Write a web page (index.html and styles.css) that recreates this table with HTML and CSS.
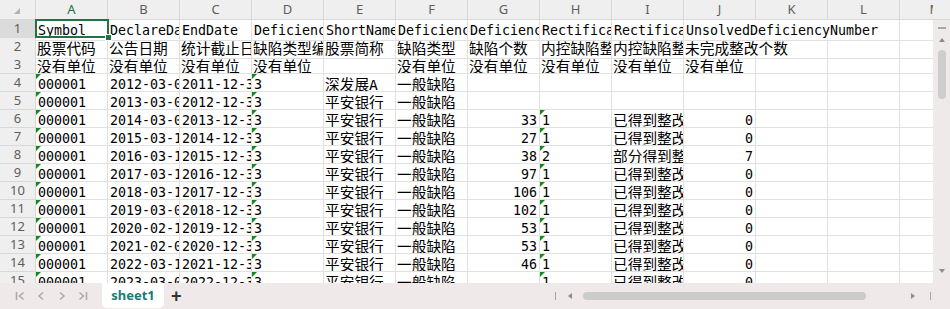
FILE: index.html
```html
<!DOCTYPE html>
<html lang="zh">
<head>
<meta charset="utf-8">
<title>sheet1</title>
<link rel="stylesheet" href="styles.css">
</head>
<body>
<div class="app">
  <div class="main">
    <div class="sheet">
      <div class="row hdr">
        <div class="corner"></div>
        <div class="colh sel">A</div><div class="colh">B</div><div class="colh">C</div><div class="colh">D</div><div class="colh">E</div><div class="colh">F</div><div class="colh">G</div><div class="colh">H</div><div class="colh">I</div><div class="colh">J</div><div class="colh">K</div><div class="colh">L</div><div class="colh">M</div>
      </div>
      <div class="row">
        <div class="rowh sel">1</div>
        <div class="c">Symbol</div><div class="c">DeclareDate</div><div class="c">EndDate</div><div class="c">DeficiencyTypeID</div><div class="c">ShortName</div><div class="c">DeficiencyType</div><div class="c">DeficiencyNumber</div><div class="c">RectificationStatusID</div><div class="c">RectificationStatus</div><div class="c spill">UnsolvedDeficiencyNumber</div><div class="c nb"></div><div class="c"></div><div class="c"></div>
      </div>
      <div class="row">
        <div class="rowh">2</div>
        <div class="c zh">股票代码</div><div class="c zh">公告日期</div><div class="c zh">统计截止日期</div><div class="c zh">缺陷类型编码</div><div class="c zh">股票简称</div><div class="c zh">缺陷类型</div><div class="c zh">缺陷个数</div><div class="c zh">内控缺陷整改状态编码</div><div class="c zh">内控缺陷整改状态</div><div class="c zh spill">未完成整改个数</div><div class="c"></div><div class="c"></div><div class="c"></div>
      </div>
      <div class="row">
        <div class="rowh">3</div>
        <div class="c zh">没有单位</div><div class="c zh">没有单位</div><div class="c zh">没有单位</div><div class="c zh">没有单位</div><div class="c"></div><div class="c zh">没有单位</div><div class="c zh">没有单位</div><div class="c zh">没有单位</div><div class="c zh">没有单位</div><div class="c zh">没有单位</div><div class="c"></div><div class="c"></div><div class="c"></div>
      </div>
      <div class="row">
        <div class="rowh">4</div>
        <div class="c t">000001</div><div class="c">2012-03-09</div><div class="c">2011-12-31</div><div class="c t">3</div><div class="c zh">深发展A</div><div class="c zh">一般缺陷</div><div class="c"></div><div class="c"></div><div class="c"></div><div class="c"></div><div class="c"></div><div class="c"></div><div class="c"></div>
      </div>
      <div class="row">
        <div class="rowh">5</div>
        <div class="c t">000001</div><div class="c">2013-03-08</div><div class="c">2012-12-31</div><div class="c t">3</div><div class="c zh">平安银行</div><div class="c zh">一般缺陷</div><div class="c"></div><div class="c"></div><div class="c"></div><div class="c"></div><div class="c"></div><div class="c"></div><div class="c"></div>
      </div>
      <div class="row">
        <div class="rowh">6</div>
        <div class="c t">000001</div><div class="c">2014-03-07</div><div class="c">2013-12-31</div><div class="c t">3</div><div class="c zh">平安银行</div><div class="c zh">一般缺陷</div><div class="c n">33</div><div class="c t">1</div><div class="c zh">已得到整改</div><div class="c n">0</div><div class="c"></div><div class="c"></div><div class="c"></div>
      </div>
      <div class="row">
        <div class="rowh">7</div>
        <div class="c t">000001</div><div class="c">2015-03-13</div><div class="c">2014-12-31</div><div class="c t">3</div><div class="c zh">平安银行</div><div class="c zh">一般缺陷</div><div class="c n">27</div><div class="c t">1</div><div class="c zh">已得到整改</div><div class="c n">0</div><div class="c"></div><div class="c"></div><div class="c"></div>
      </div>
      <div class="row">
        <div class="rowh">8</div>
        <div class="c t">000001</div><div class="c">2016-03-10</div><div class="c">2015-12-31</div><div class="c t">3</div><div class="c zh">平安银行</div><div class="c zh">一般缺陷</div><div class="c n">38</div><div class="c t">2</div><div class="c zh">部分得到整改</div><div class="c n">7</div><div class="c"></div><div class="c"></div><div class="c"></div>
      </div>
      <div class="row">
        <div class="rowh">9</div>
        <div class="c t">000001</div><div class="c">2017-03-17</div><div class="c">2016-12-31</div><div class="c t">3</div><div class="c zh">平安银行</div><div class="c zh">一般缺陷</div><div class="c n">97</div><div class="c t">1</div><div class="c zh">已得到整改</div><div class="c n">0</div><div class="c"></div><div class="c"></div><div class="c"></div>
      </div>
      <div class="row">
        <div class="rowh">10</div>
        <div class="c t">000001</div><div class="c">2018-03-15</div><div class="c">2017-12-31</div><div class="c t">3</div><div class="c zh">平安银行</div><div class="c zh">一般缺陷</div><div class="c n">106</div><div class="c t">1</div><div class="c zh">已得到整改</div><div class="c n">0</div><div class="c"></div><div class="c"></div><div class="c"></div>
      </div>
      <div class="row">
        <div class="rowh">11</div>
        <div class="c t">000001</div><div class="c">2019-03-07</div><div class="c">2018-12-31</div><div class="c t">3</div><div class="c zh">平安银行</div><div class="c zh">一般缺陷</div><div class="c n">102</div><div class="c t">1</div><div class="c zh">已得到整改</div><div class="c n">0</div><div class="c"></div><div class="c"></div><div class="c"></div>
      </div>
      <div class="row">
        <div class="rowh">12</div>
        <div class="c t">000001</div><div class="c">2020-02-14</div><div class="c">2019-12-31</div><div class="c t">3</div><div class="c zh">平安银行</div><div class="c zh">一般缺陷</div><div class="c n">53</div><div class="c t">1</div><div class="c zh">已得到整改</div><div class="c n">0</div><div class="c"></div><div class="c"></div><div class="c"></div>
      </div>
      <div class="row">
        <div class="rowh">13</div>
        <div class="c t">000001</div><div class="c">2021-02-02</div><div class="c">2020-12-31</div><div class="c t">3</div><div class="c zh">平安银行</div><div class="c zh">一般缺陷</div><div class="c n">53</div><div class="c t">1</div><div class="c zh">已得到整改</div><div class="c n">0</div><div class="c"></div><div class="c"></div><div class="c"></div>
      </div>
      <div class="row">
        <div class="rowh">14</div>
        <div class="c t">000001</div><div class="c">2022-03-10</div><div class="c">2021-12-31</div><div class="c t">3</div><div class="c zh">平安银行</div><div class="c zh">一般缺陷</div><div class="c n">46</div><div class="c t">1</div><div class="c zh">已得到整改</div><div class="c n">0</div><div class="c"></div><div class="c"></div><div class="c"></div>
      </div>
      <div class="row">
        <div class="rowh">15</div>
        <div class="c t">000001</div><div class="c">2023-03-09</div><div class="c">2022-12-31</div><div class="c t">3</div><div class="c zh">平安银行</div><div class="c zh">一般缺陷</div><div class="c n"></div><div class="c t">1</div><div class="c zh">已得到整改</div><div class="c n">0</div><div class="c"></div><div class="c"></div><div class="c"></div>
      </div>
      <div class="selection"><span class="handle"></span></div>
    </div>
    <div class="vscroll">
      <div class="vcap"></div>
      <div class="vtrack">
        <span class="vbar"></span>
        <span class="vup"></span>
        <span class="vthumb"></span>
        <span class="vfill"></span>
        <span class="vdown"></span>
      </div>
    </div>
  </div>
  <div class="tabbar">
    <div class="nav">
      <span class="navbtn"><svg width="10" height="10" viewBox="0 0 10 10"><path d="M1.5 1v8M8.5 1.5L4.5 5l4 3.5" fill="none" stroke="#a9a9a9" stroke-width="1.5"/></svg></span>
      <span class="navbtn"><svg width="10" height="10" viewBox="0 0 10 10"><path d="M7 1.5L3 5l4 3.5" fill="none" stroke="#a9a9a9" stroke-width="1.5"/></svg></span>
      <span class="navbtn"><svg width="10" height="10" viewBox="0 0 10 10"><path d="M3 1.5L7 5l-4 3.5" fill="none" stroke="#a9a9a9" stroke-width="1.5"/></svg></span>
      <span class="navbtn"><svg width="10" height="10" viewBox="0 0 10 10"><path d="M1.5 1.5L5.5 5l-4 3.5M8.5 1v8" fill="none" stroke="#a9a9a9" stroke-width="1.5"/></svg></span>
    </div>
    <div class="tab">sheet1</div>
    <div class="add">+</div>
    <div class="tabfill"></div>
    <div class="hscroll">
      <span class="hbar"></span>
      <span class="hleft"></span>
      <span class="hthumb"></span>
      <span class="hright"></span>
      <span class="hbar end"></span>
    </div>
  </div>
</div>
</body>
</html>
```

FILE: styles.css
```css
* { box-sizing: border-box; }
html, body { margin: 0; padding: 0; background: #ffffff; }
body { width: 950px; height: 309px; overflow: hidden; }

.app { width: 950px; height: 309px; display: flex; flex-direction: column; }
.main { height: 283px; display: flex; }

.sheet {
  flex: 1;
  position: relative;
  overflow: hidden;
  background: #ffffff;
}

.row {
  display: grid;
  grid-template-columns: 36px repeat(13, 72px);
  height: 18px;
}
.row.hdr { height: 20px; }

.corner {
  position: relative;
  background: #efefef;
  border-right: 1px solid #d8d8d8;
  border-bottom: 1px solid #d8d8d8;
}
.corner::after {
  content: "";
  position: absolute;
  left: 14px;
  top: 8px;
  border-bottom: 6px solid #b3b3b3;
  border-left: 6px solid transparent;
}

.colh {
  background: #efefef;
  border-right: 1px solid #d8d8d8;
  border-bottom: 1px solid #d8d8d8;
  text-align: center;
  font: 13px/19px "Noto Sans", "Liberation Sans", sans-serif;
  color: #5e5e5e;
  overflow: hidden;
}
.colh.sel { color: #217346; }

.rowh {
  background: #efefef;
  border-right: 1px solid #d8d8d8;
  border-bottom: 1px solid #d8d8d8;
  text-align: center;
  font: 13px/17px "Noto Sans", "Liberation Sans", sans-serif;
  color: #5e5e5e;
}
.rowh.sel { background: #dbdbdb; }

.c {
  position: relative;
  border-right: 1px solid #e1e1e1;
  border-bottom: 1px solid #e1e1e1;
  padding: 2px 2px 0 2px;
  overflow: hidden;
  white-space: nowrap;
  font: 13.3px/18px "DejaVu Sans Mono", "Noto Sans CJK SC", monospace;
  color: #000000;
}
.c.zh { font-size: 14.7px; padding-left: 1px; }
.c.n { text-align: right; }
.c.spill { overflow: visible; border-right-color: transparent; z-index: 1; }
.c.nb { border-right-color: transparent; }
.c.t::before {
  content: "";
  position: absolute;
  left: 0;
  top: 0;
  border-top: 5px solid #13891c;
  border-right: 5px solid transparent;
}

.selection {
  position: absolute;
  left: 35px;
  top: 19px;
  width: 74px;
  height: 19px;
  border: 2px solid #217346;
  z-index: 2;
}
.handle {
  position: absolute;
  right: -5px;
  bottom: -5px;
  width: 7px;
  height: 7px;
  background: #217346;
  border: 1px solid #ffffff;
}

.vscroll { width: 17px; display: flex; flex-direction: column; }
.vcap {
  height: 20px;
  background: #efefef;
  border-bottom: 1px solid #d8d8d8;
}
.vtrack {
  flex: 1;
  background: #eeeae9;
  display: flex;
  flex-direction: column;
  align-items: center;
  padding-top: 7px;
}
.vbar { width: 8px; height: 2px; background: #a8a8a8; }
.vup {
  margin-top: 9px;
  width: 0; height: 0;
  border-left: 3.5px solid transparent;
  border-right: 3.5px solid transparent;
  border-bottom: 4px solid #8c8c8c;
}
.vthumb {
  margin-top: 8px;
  width: 8px;
  height: 49px;
  border-radius: 4px;
  background: #cdcdcd;
}
.vfill { flex: 1; }
.vdown {
  margin-bottom: 10px;
  width: 0; height: 0;
  border-left: 3.5px solid transparent;
  border-right: 3.5px solid transparent;
  border-top: 4px solid #8c8c8c;
}

.tabbar {
  height: 26px;
  background: #efe9e9;
  display: flex;
  align-items: center;
}
.nav { display: flex; padding-left: 9px; }
.navbtn {
  width: 21px;
  height: 26px;
  display: flex;
  align-items: center;
  justify-content: center;
}
.tab {
  align-self: flex-start;
  margin-left: 9px;
  width: 62px;
  height: 25px;
  background: #ffffff;
  border-radius: 0 0 5px 5px;
  text-align: center;
  font: bold 13px/25px "Noto Sans", "Liberation Sans", sans-serif;
  color: #1c7a73;
}
.add {
  margin-left: 7px;
  font: bold 18px/26px "Liberation Sans", sans-serif;
  color: #333333;
}
.tabfill { flex: 1; }
.hscroll { display: flex; align-items: center; margin-right: 19px; }
.hbar { width: 1px; height: 8px; background: #a8a8a8; }
.hleft {
  margin-left: 12px;
  width: 0; height: 0;
  border-top: 3.5px solid transparent;
  border-bottom: 3.5px solid transparent;
  border-right: 4px solid #8c8c8c;
}
.hthumb {
  margin-left: 11px;
  width: 283px;
  height: 8px;
  border-radius: 4px;
  background: #cbcbcb;
}
.hright {
  margin-left: 45px;
  width: 0; height: 0;
  border-top: 3.5px solid transparent;
  border-bottom: 3.5px solid transparent;
  border-left: 4px solid #8c8c8c;
}
.hbar.end { margin-left: 15px; }
```
